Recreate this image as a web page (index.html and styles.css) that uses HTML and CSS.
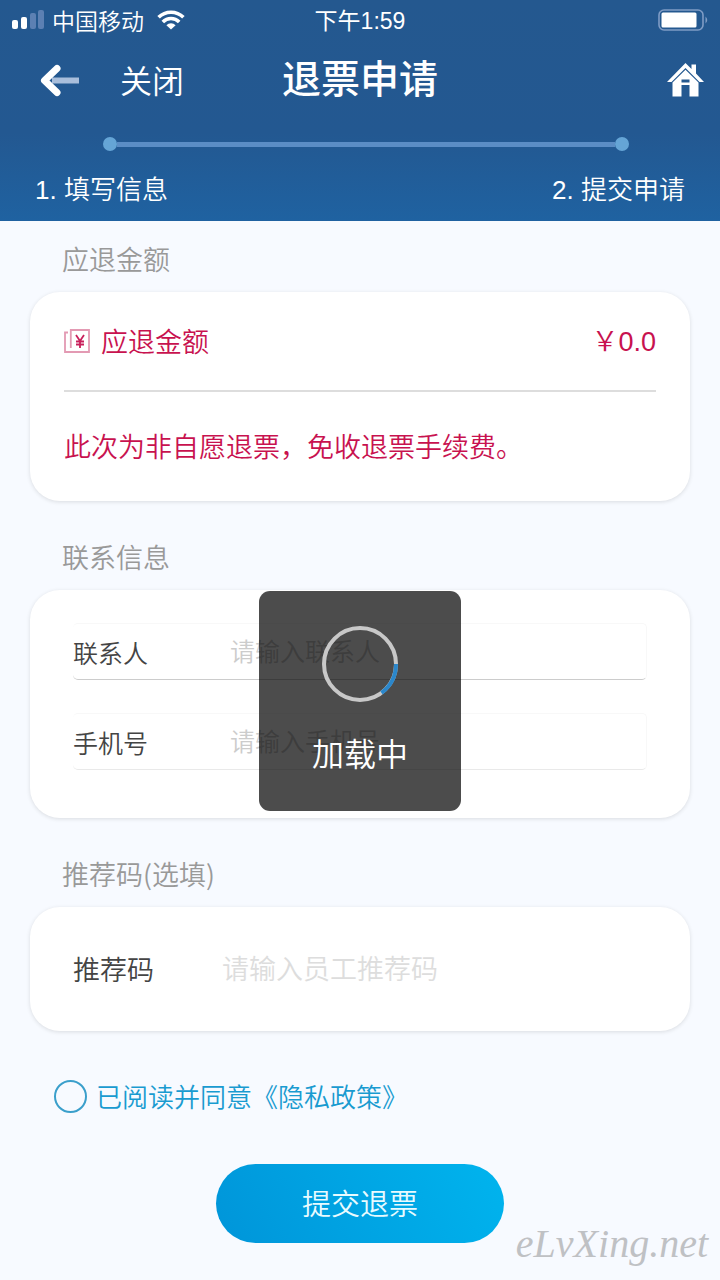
FILE: index.html
```html
<!DOCTYPE html>
<html lang="zh-CN">
<head>
<meta charset="utf-8">
<meta name="viewport" content="width=device-width, initial-scale=1">
<title>退票申请</title>
<link rel="stylesheet" href="styles.css">
</head>
<body>
<div class="page">
  <header class="header">
    <div class="status">
      <div class="status-left">
        <svg class="signal" viewBox="0 0 32 20" aria-hidden="true">
          <rect x="0" y="10" width="6" height="9" rx="2" fill="#fff"/>
          <rect x="9" y="7" width="6" height="12" rx="2" fill="#fff"/>
          <rect x="18" y="3" width="6" height="16" rx="2" fill="#5c80b3"/>
          <rect x="26" y="0" width="6" height="19" rx="2" fill="#5c80b3"/>
        </svg>
        <span class="carrier">中国移动</span>
        <svg class="wifi" viewBox="0 0 28 20" aria-hidden="true">
          <g fill="none" stroke="#fff" stroke-width="3.6">
            <path d="M1.6 7.3a17.6 17.6 0 0 1 24.800 0"/>
            <path d="M5.800 11.900a11.600 11.600 0 0 1 16.400 0"/>
          </g>
          <path d="M9.400 15.200a6.600 6.600 0 0 1 9.200 0L14 19.600z" fill="#fff"/>
        </svg>
      </div>
      <span class="time">下午<span class="latin">1:59</span></span>
      <svg class="battery" viewBox="0 0 50 22" aria-hidden="true">
        <rect x="1" y="1" width="44" height="20" rx="5" fill="none" stroke="#7f9cc5" stroke-width="1.6"/>
        <rect x="3.500" y="3.500" width="35" height="15" rx="1.500" fill="#fff"/>
        <path d="M47.500 7.500q3.500 3.500 0 7z" fill="#7f9cc5"/>
      </svg>
    </div>
    <nav class="nav">
      <div class="nav-left">
        <button class="icon-button" type="button" aria-label="返回">
          <svg class="back" viewBox="0 0 40 34" aria-hidden="true">
            <path d="M12 17.500H39" stroke="#a9bedb" stroke-width="6"/>
            <path d="M17 5.500 4.500 17.500 17 29.500" fill="none" stroke="#fff" stroke-width="7" stroke-linecap="round" stroke-linejoin="round"/>
          </svg>
        </button>
        <button class="close" type="button">关闭</button>
      </div>
      <h1 class="title">退票申请</h1>
      <button class="icon-button home-button" type="button" aria-label="首页">
        <svg class="home" viewBox="0 0 37 34" aria-hidden="true">
          <path d="M0 19 18.500 0 24.500 6V1.500h4.500v9L37 19h-4.500L18.500 5 4.500 19z" fill="#fff"/>
          <path d="M5.500 19.500 18.500 6.800l13 12.700V33.500h-9V22h-8v11.500h-9z" fill="#fff"/>
          <path d="M14.500 16.500h8v3h-8z" fill="#24588f"/>
        </svg>
      </button>
    </nav>
    <div class="track"><span class="dot"></span><span class="line"></span><span class="dot"></span></div>
    <div class="steps">
      <span><span class="latin">1. </span>填写信息</span>
      <span><span class="latin">2. </span>提交申请</span>
    </div>
  </header>

  <main class="content">
    <form class="form">
      <section class="section">
        <h2 class="section-title">应退金额</h2>
        <div class="card refund">
          <div class="amount">
            <svg class="ticket" viewBox="0 0 26 24" aria-hidden="true">
              <path d="M6.800 19V1H25v22H1V3.500h3" fill="none" stroke="#e39ab3" stroke-width="1.800"/>
              <path d="M12 6l4 6 4-6M16 12v7M12 12.500h8M12 15.500h8" fill="none" stroke="#c9205c" stroke-width="1.800"/>
            </svg>
            <span>应退金额</span>
            <span class="price">￥<span class="latin">0.0</span></span>
          </div>
          <p class="notice">此次为非自愿退票，免收退票手续费。</p>
        </div>
      </section>

      <section class="section">
        <h2 class="section-title">联系信息</h2>
        <div class="card contact">
          <div class="field strong">
            <label for="name">联系人</label>
            <input id="name" type="text" placeholder="请输入联系人">
          </div>
          <div class="field">
            <label for="phone">手机号</label>
            <input id="phone" type="tel" placeholder="请输入手机号">
          </div>
        </div>
      </section>

      <section class="section">
        <h2 class="section-title">推荐码(选填)</h2>
        <div class="card referral">
          <label for="code">推荐码</label>
          <input id="code" type="text" placeholder="请输入员工推荐码">
        </div>
      </section>

      <div class="agree">
        <input id="agree" type="checkbox">
        <label for="agree">已阅读并同意<a href="#privacy">《隐私政策》</a></label>
      </div>
      <button class="submit" type="button">提交退票</button>
    </form>
  </main>

  <div class="overlay">
    <div class="loading" role="status">
      <svg class="spinner" viewBox="0 0 76 76" aria-hidden="true">
        <circle cx="38" cy="38" r="36" fill="none" stroke="#c8c8c8" stroke-width="4"/>
        <path d="M74 38A36 36 0 0 1 59.500 66.900" fill="none" stroke="#2b87cb" stroke-width="4"/>
      </svg>
      <span>加载中</span>
    </div>
  </div>
  <div class="watermark">eLvXing.net</div>
</div>
</body>
</html>
```
FILE: styles.css
```css
* {
  box-sizing: border-box;
}

body {
  margin: 0;
  background: #f7faff;
  color: #444;
  font-family: "Noto Sans CJK SC", sans-serif;
  font-weight: 350;
  font-size: 27px;
  line-height: 36px;
}

h1, h2, p {
  margin: 0;
  font-weight: inherit;
}

button, input {
  margin: 0;
  padding: 0;
  border: 0;
  background: none;
  color: inherit;
  font: inherit;
}

svg {
  display: block;
  flex: none;
}

.latin {
  font-family: "Liberation Sans", sans-serif;
}

.page {
  position: relative;
  min-height: 100vh;
}

.header {
  padding-bottom: 13px;
  background: linear-gradient(#24588f, #235891 60%, #1f62a1);
  color: #fff;
}

.status {
  display: grid;
  grid-template-columns: 1fr auto 1fr;
  align-items: center;
  height: 40px;
  padding: 0 12px;
  font-size: 23px;
}

.status-left {
  display: flex;
  align-items: center;
  gap: 8px;
}

.signal {
  width: 32px;
  height: 20px;
}

.wifi {
  width: 28px;
  height: 20px;
  margin-left: 5px;
}

.time {
  font-weight: 400;
}

.battery {
  width: 50px;
  height: 22px;
  justify-self: end;
}

.nav {
  display: grid;
  grid-template-columns: 1fr auto 1fr;
  align-items: center;
  height: 80px;
  padding: 0 16px;
}

.nav-left {
  display: flex;
  align-items: center;
  gap: 40px;
  padding-left: 24px;
}

.back {
  width: 40px;
  height: 34px;
}

.close {
  padding-bottom: 2px;
  font-size: 32px;
}

.title {
  padding-bottom: 8px;
  font-size: 39px;
  font-weight: 500;
}

.home {
  width: 37px;
  height: 34px;
}

.home-button {
  justify-self: end;
}

.track {
  display: flex;
  align-items: center;
  height: 48px;
  padding: 0 91px 0 103px;
}

.dot {
  width: 14px;
  height: 14px;
  border-radius: 50%;
  background: #65a5d6;
}

.line {
  flex: 1;
  height: 5px;
  background: #5b8dc5;
}

.steps {
  display: flex;
  justify-content: space-between;
  padding: 2px 35px 0;
  font-size: 26px;
}

.content {
  padding: 20px 30px 36px;
}

.form {
  display: flex;
  flex-direction: column;
}

.section {
  display: flex;
  flex-direction: column;
  gap: 15px;
  margin-bottom: 38px;
}

.section-title {
  padding-left: 32px;
  color: #999;
  font-size: 27px;
}

.card {
  border-radius: 30px;
  background: #fff;
  box-shadow: 0 1px 4px rgba(0, 0, 0, 0.12);
}

.refund {
  padding: 0 34px;
  color: #c8124f;
}

.amount {
  display: flex;
  align-items: center;
  gap: 11px;
  height: 100px;
  border-bottom: 2px solid #ddd;
}

.ticket {
  width: 26px;
  height: 24px;
}

.price {
  margin-left: auto;
}

.notice {
  padding: 36px 0 37px;
}

.contact {
  display: flex;
  flex-direction: column;
  gap: 33px;
  padding: 33px 43px 48px;
  font-size: 25px;
}

.field {
  display: flex;
  align-items: center;
  height: 57px;
  border: 1px solid #f8f8f8;
  border-bottom-color: #e9e9e9;
  border-left: 0;
  border-radius: 5px;
}

.field.strong {
  border-bottom-color: #ccc;
}

.field label {
  width: 157px;
}

.field input,
.referral input {
  flex: 1;
  min-width: 0;
  height: 38px;
  padding-bottom: 3px;
}

.field input::placeholder {
  color: #ccc;
}

.referral {
  display: flex;
  align-items: center;
  padding: 43px;
}

.referral label {
  width: 149px;
}

.referral input::placeholder {
  color: #ddd;
}

.agree {
  display: flex;
  align-items: center;
  gap: 9px;
  margin-top: 9px;
  padding-left: 24px;
  color: #199bd0;
  font-size: 26px;
}

.agree input {
  width: 33px;
  height: 33px;
  border: 2px solid #3a9fcb;
  border-radius: 50%;
  appearance: none;
}

.agree a {
  color: inherit;
  text-decoration: none;
}

.submit {
  align-self: center;
  width: 288px;
  height: 79px;
  margin-top: 50px;
  padding-bottom: 4px;
  border-radius: 40px;
  background: linear-gradient(60deg, #0095d9, #00b4ee);
  color: #e8fbff;
  font-size: 29px;
}

.overlay {
  position: absolute;
  inset: 122px 0 0;
  display: grid;
  place-items: center;
}

.loading {
  display: flex;
  flex-direction: column;
  align-items: center;
  gap: 26px;
  padding: 35px 53px;
  border-radius: 11px;
  background: rgba(0, 0, 0, 0.7);
  color: #fff;
  font-size: 32px;
  line-height: 48px;
}

.spinner {
  width: 76px;
  height: 76px;
}

.watermark {
  position: absolute;
  right: 12px;
  bottom: 14px;
  color: #bfc1c4;
  font-family: "Liberation Serif", serif;
  font-size: 40px;
  font-style: italic;
  line-height: 44px;
}
```
